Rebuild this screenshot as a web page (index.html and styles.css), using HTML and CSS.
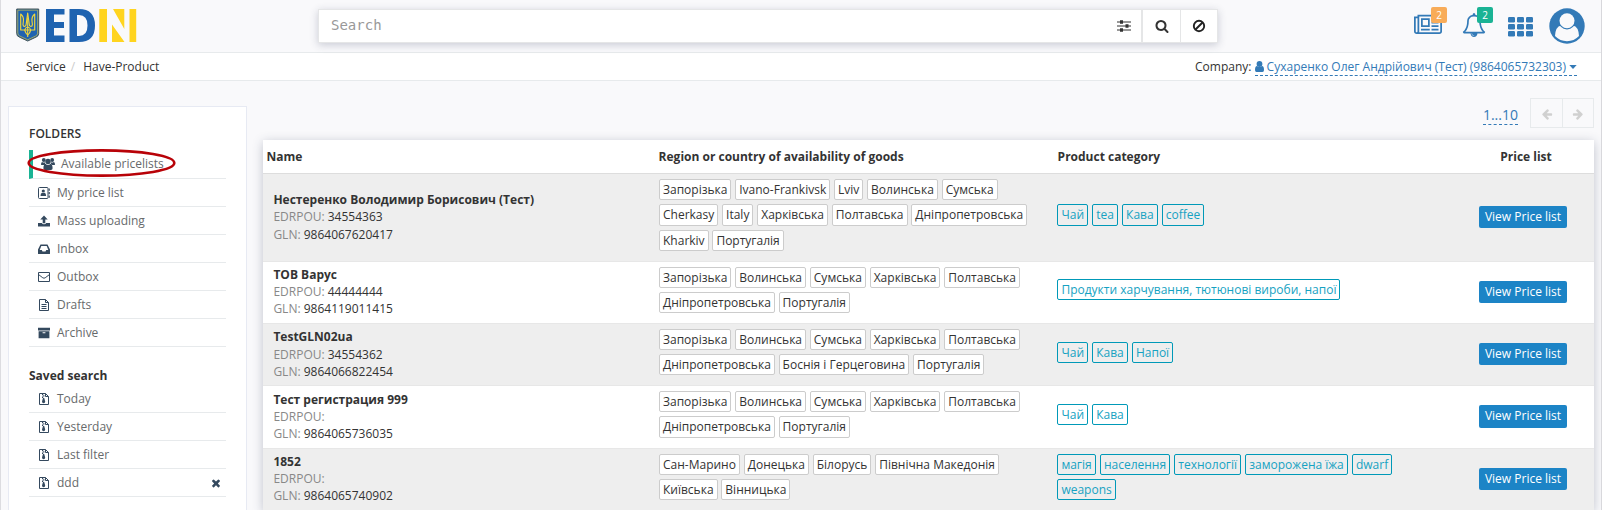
FILE: index.html
```html
<!DOCTYPE html>
<html lang="en">
<head>
<meta charset="utf-8">
<title>EDIN – Have-Product</title>
<link rel="stylesheet" href="styles.css">
</head>
<body>
<svg class="defs" aria-hidden="true">
  <symbol id="file" viewBox="0 0 12 12"><path d="M1.5.5h6l3 3v8h-9z M7.5.5v3h3" fill="none" stroke="currentColor"/><path d="M3.5 5.5h5M3.5 7.5h5M3.5 9.5h5" stroke="currentColor" fill="none"/></symbol>
  <symbol id="zip" viewBox="0 0 12 12"><path d="M1.5.5h6l3 3v8h-9z M7.5.5v3h3" fill="none" stroke="currentColor"/><path d="M4 1h1.2v1.3H4zM5.2 2.3h1.2v1.3H5.2zM4 3.6h1.2v1.3H4zM5 4.9h1.2L7.2 8.6Q7.2 10.2 5.6 10.2T4 8.6z" fill="currentColor"/></symbol>
  <symbol id="arrow" viewBox="0 0 1792 1792"><path fill="currentColor" d="M1600 960q0 54-37 91l-651 651q-39 37-91 37-51 0-90-37l-75-75q-38-38-38-91t38-91l293-293h-704q-52 0-84.5-37.5t-32.5-90.5v-128q0-53 32.5-90.5t84.5-37.5h704l-293-294q-38-36-38-90t38-90l75-75q38-38 90-38 53 0 91 38l651 651q37 35 37 90z"/></symbol>
</svg>
<div class="page">
  <header class="topbar">
    <svg class="logo" width="121" height="34" viewBox="0 0 121 34">
      <path d="M.7 1h22v24.500q0 2.500-2.500 3.500l-8.500 4-8.500-4q-2.500-1-2.500-3.500z" fill="#1f63b0" stroke="#46565c" stroke-width="1"/>
      <g fill="none" stroke="#f0d53c" stroke-linejoin="round">
        <path d="M1.800 2.200h19.800v23q0 2-2 2.800l-7.900 3.800-7.900-3.800q-2-.8-2-2.800z" stroke-width=".6"/>
        <path d="M4.700 6v16h4q.8 3.500 3 5 2.200-1.500 3-5h4V6q-3.200 2.500-2.700 7l.4 3.500q0 2-1.700 2-1.500-.3-1.500-2.500L11.700 5l-1.500 11q0 2.200-1.500 2.500-1.700 0-1.700-2L7.400 13Q7.900 8.500 4.700 6z" stroke-width="1.150"/>
        <path d="M11.700 10v19M8.700 22q.5-2.500 3-3 2.500.5 3 3z" stroke-width="1.100"/>
      </g>
      <path d="M30 1h18.500v5.500H38v7.500h10v6H38v7.500h10.500V34H30z" fill="#1f63b0"/>
      <path fill-rule="evenodd" d="M53.500 1H63q16 0 16 16.500T63 34h-9.500zM61 7v21h2q8.500 0 8.500-10.500T63 7z" fill="#1f63b0"/>
      <path d="M83.300 1h7.700v33h-7.700zM96 16.500l12.500 17.500H96zM97 1h11.300v20zM113.500 1h6.700v33h-6.700z" fill="#ffd41f"/>
    </svg>
    <div class="search">
      <div class="search-field"><span>Search</span>
        <svg width="14" height="12" viewBox="0 0 14 12"><path d="M0 2h14M0 6h14M0 10h14" stroke="#333" stroke-width="1.200"/><path d="M3 .3h3v3.400H3zM8.500 4.300h3v3.400h-3zM3 8.300h3v3.400H3z" fill="#333"/></svg>
      </div>
      <div class="search-btn"><svg width="14" height="14" viewBox="0 0 1792 1792"><path fill="#333" d="M1216 832q0-185-131.500-316.500t-316.500-131.500-316.500 131.500-131.500 316.500 131.500 316.500 316.500 131.500 316.500-131.500 131.500-316.500zm512 832q0 52-38 90t-90 38q-54 0-90-38l-343-342q-179 124-399 124-143 0-273.500-55.500t-225-150-150-225-55.500-273.500 55.500-273.500 150-225 225-150 273.500-55.500 273.500 55.500 225 150 150 225 55.500 273.500q0 220-124 399l343 343q37 37 37 90z"/></svg></div>
      <div class="search-btn"><svg width="14" height="14" viewBox="0 0 14 14"><g fill="none" stroke="#222" stroke-width="1.900"><circle cx="7" cy="7" r="5.200"/><path d="M3.500 10.500l7-7"/></g></svg></div>
    </div>
    <nav class="actions">
      <span class="action news"><svg width="28" height="24.500" viewBox="0 0 2048 1792"><path fill="currentColor" d="M1024 512h-384v384h384v-384zm128 640v128h-640v-128h640zm0-768v640h-640v-640h640zm640 768v128h-512v-128h512zm0-256v128h-512v-128h512zm0-256v128h-512v-128h512zm0-256v128h-512v-128h512zm-1536 960v-960h-128v960q0 26 19 45t45 19 45-19 19-45zm1664 0v-1088h-1536v1088q0 33-11 64h1483q26 0 45-19t19-45zm128-1216v1216q0 80-56 136t-136 56h-1664q-80 0-136-56t-56-136v-1088h256v-128h1792z"/></svg><b class="badge orange">2</b></span>
      <span class="action bell"><svg width="24" height="24" viewBox="0 0 1792 1792"><path fill="currentColor" d="M912 1696q0-16-16-16-59 0-101.500-42.500t-42.500-101.500q0-16-16-16t-16 16q0 73 51.500 124.500t124.500 51.500q16 0 16-16zm-666-288h1300q-266-300-266-832 0-51-24-105t-69-103-121.500-80.500-169.500-31.500-169.500 31.500-121.500 80.500-69 103-24 105q0 532-266 832zm1482 0q0 52-38 90t-90 38h-448q0 106-75 181t-181 75-181-75-75-181h-448q-52 0-90-38t-38-90q50-42 91-88t85-119.500 74.500-158.500 50-206 19.500-260q0-152 117-282.500t307-158.500q-8-19-8-39 0-40 28-68t68-28 68 28 28 68q0 20-8 39 190 28 307 158.500t117 282.500q0 139 19.500 260t50 206 74.500 158.500 85 119.500 91 88z"/></svg><b class="badge green">2</b></span>
      <svg class="grid-icon" width="25" height="20" viewBox="0 0 25 20"><g fill="currentColor"><rect width="7" height="5.500" rx="1.200"/><rect x="9" width="7" height="5.500" rx="1.200"/><rect x="18" width="7" height="5.500" rx="1.200"/><rect y="7" width="7" height="5.500" rx="1.200"/><rect x="9" y="7" width="7" height="5.500" rx="1.200"/><rect x="18" y="7" width="7" height="5.500" rx="1.200"/><rect y="14" width="7" height="5.500" rx="1.200"/><rect x="9" y="14" width="7" height="5.500" rx="1.200"/><rect x="18" y="14" width="7" height="5.500" rx="1.200"/></g></svg>
      <svg width="36" height="36" viewBox="0 0 36 36"><circle cx="18" cy="18" r="17.700" fill="currentColor"/><path d="M6 28q.5-9.500 6-10.500 6 4.500 12 0 5.500 1 6 10.500Q25 33.200 18 33.200T6 28z" fill="#f9f9fb"/><circle cx="18" cy="12.700" r="8.700" fill="currentColor"/><circle cx="18" cy="12.700" r="7.500" fill="#f9f9fb"/></svg>
    </nav>
  </header>

  <div class="crumbs">
    <div class="trail"><span>Service</span><i>/</i><span>Have-Product</span></div>
    <div class="company">Company:&nbsp;<a class="company-link"><svg width="9" height="11" viewBox="0 0 9 11"><circle cx="4.500" cy="3" r="2.900" fill="currentColor"/><path d="M0 9q0-3.800 2-4 2.500 1.800 5 0 2 .2 2 4 0 2-1.500 2h-6Q0 11 0 9z" fill="currentColor"/></svg><span>Сухаренко Олег Андрійович (Тест) (9864065732303)</span><svg width="8" height="4" viewBox="0 0 8 4"><path d="M.3 0h7.400L4 4z" fill="currentColor"/></svg></a></div>
  </div>

  <div class="body">
    <aside class="sidebar">
      <h4 class="folders">FOLDERS</h4>
      <ul class="menu">
        <li class="active"><svg width="14" height="12" viewBox="0 0 14 12"><g fill="currentColor"><circle cx="2.800" cy="2" r="1.900"/><circle cx="11.200" cy="2" r="1.900"/><circle cx="7" cy="3.500" r="2.700"/><path d="M0 6.500Q0 4 1.200 4q1.500 1 2.700.2 0 1.300.8 2L3 7H1Q0 7 0 6.500zM14 6.500Q14 4 12.800 4q-1.500 1-2.700.2 0 1.300-.8 2L11 7h2q1 0 1-.5zM2.400 10.200q0-4 2.200-4.200 2.400 1.800 4.800 0 2.200.2 2.200 4.200 0 1.800-1.600 1.800H4q-1.600 0-1.600-1.800z"/></g></svg>Available pricelists<svg class="mark" width="149" height="30" viewBox="0 0 149 30"><ellipse cx="74.500" cy="15" rx="72.800" ry="12.600" fill="none" stroke="#b80208" stroke-width="2.600"/></svg></li>
        <li><svg width="12" height="12" viewBox="0 0 12 12"><rect x=".5" y=".5" width="9.500" height="11" rx="1" fill="none" stroke="currentColor"/><circle cx="5.300" cy="4" r="1.600" fill="currentColor"/><path d="M2.500 9q0-3 1.500-3.300 1.300.8 2.600 0Q8.100 6 8.100 9z" fill="currentColor"/><path d="M11.200 1.500v2.300M11.200 5v2.300M11.200 8.500v2.300" stroke="currentColor" stroke-width="1.200"/></svg>My price list</li>
        <li><svg width="12" height="12" viewBox="0 0 12 12"><path d="M6 .5l3.700 4H7.300v3.700H4.700V4.500H2.300zM0 8h3.800q.5 1.300 2.200 1.300T8.200 8H12v3.500H0z" fill="currentColor"/></svg>Mass uploading</li>
        <li><svg width="12" height="12" viewBox="0 0 12 12"><path fill-rule="evenodd" d="M2.500 1.500h7L12 6.500v4q0 .5-.5.500H.5q-.5 0-.5-.5v-4zM3.300 3L1.700 7h2.100l.7 1.400h3L8.200 7h2.100L8.700 3z" fill="currentColor"/></svg>Inbox</li>
        <li><svg width="12" height="12" viewBox="0 0 12 12"><path d="M.5 1.500h11v9H.5zM.5 3.500l4.300 3.300q1.200.8 2.400 0l4.300-3.300" fill="none" stroke="currentColor"/></svg>Outbox</li>
        <li><svg width="12" height="12"><use href="#file"/></svg>Drafts</li>
        <li><svg width="12" height="12" viewBox="0 0 12 12"><path fill-rule="evenodd" d="M0 .7h12v2.800H0zM.6 4.200h10.800v7H.6zM4.600 5.200v1h2.800v-1z" fill="currentColor"/></svg>Archive</li>
      </ul>
      <h4 class="saved">Saved search</h4>
      <ul class="menu">
        <li><svg width="12" height="12"><use href="#zip"/></svg>Today</li>
        <li><svg width="12" height="12"><use href="#zip"/></svg>Yesterday</li>
        <li><svg width="12" height="12"><use href="#zip"/></svg>Last filter</li>
        <li><svg width="12" height="12"><use href="#zip"/></svg>ddd<svg class="remove" width="12" height="12" viewBox="0 0 1792 1792"><path fill="currentColor" d="M1490 1322q0 40-28 68l-136 136q-28 28-68 28t-68-28l-294-294-294 294q-28 28-68 28t-68-28l-136-136q-28-28-28-68t28-68l294-294-294-294q-28-28-28-68t28-68l136-136q28-28 68-28t68 28l294 294 294-294q28-28 68-28t68 28l136 136q28 28 28 68t-28 68l-294 294 294 294q28 28 28 68z"/></svg></li>
      </ul>
    </aside>

    <main class="content">
      <div class="pager"><a class="range">1...10</a><div class="pager-btns"><span><svg class="flip" width="12" height="12"><use href="#arrow"/></svg></span><span><svg width="12" height="12"><use href="#arrow"/></svg></span></div></div>
      <section class="table">
        <div class="row head"><div>Name</div><div>Region or country of availability of goods</div><div>Product category</div><div class="center">Price list</div></div>

        <div class="row odd">
          <div class="name"><b>Нестеренко Володимир Борисович (Тест)</b><p><i>EDRPOU:</i> 34554363</p><p><i>GLN:</i> 9864067620417</p></div>
          <div class="tags"><span>Запорізька</span><span>Ivano-Frankivsk</span><span>Lviv</span><span>Волинська</span><span>Сумська</span><span>Cherkasy</span><span>Italy</span><span>Харківська</span><span>Полтавська</span><span>Дніпропетровська</span><span>Kharkiv</span><span>Португалія</span></div>
          <div class="tags cat"><span>Чай</span><span>tea</span><span>Кава</span><span>coffee</span></div>
          <div class="center"><a class="view">View Price list</a></div>
        </div>
        <div class="row">
          <div class="name"><b>ТОВ Варус</b><p><i>EDRPOU:</i> 44444444</p><p><i>GLN:</i> 9864119011415</p></div>
          <div class="tags"><span>Запорізька</span><span>Волинська</span><span>Сумська</span><span>Харківська</span><span>Полтавська</span><span>Дніпропетровська</span><span>Португалія</span></div>
          <div class="tags cat"><span>Продукти харчування, тютюнові вироби, напої</span></div>
          <div class="center"><a class="view">View Price list</a></div>
        </div>
        <div class="row odd">
          <div class="name"><b>TestGLN02ua</b><p><i>EDRPOU:</i> 34554362</p><p><i>GLN:</i> 9864066822454</p></div>
          <div class="tags"><span>Запорізька</span><span>Волинська</span><span>Сумська</span><span>Харківська</span><span>Полтавська</span><span>Дніпропетровська</span><span>Боснія і Герцеговина</span><span>Португалія</span></div>
          <div class="tags cat"><span>Чай</span><span>Кава</span><span>Напої</span></div>
          <div class="center"><a class="view">View Price list</a></div>
        </div>
        <div class="row">
          <div class="name"><b>Тест регистрация 999</b><p><i>EDRPOU:</i></p><p><i>GLN:</i> 9864065736035</p></div>
          <div class="tags"><span>Запорізька</span><span>Волинська</span><span>Сумська</span><span>Харківська</span><span>Полтавська</span><span>Дніпропетровська</span><span>Португалія</span></div>
          <div class="tags cat"><span>Чай</span><span>Кава</span></div>
          <div class="center"><a class="view">View Price list</a></div>
        </div>
        <div class="row odd">
          <div class="name"><b>1852</b><p><i>EDRPOU:</i></p><p><i>GLN:</i> 9864065740902</p></div>
          <div class="tags"><span>Сан-Марино</span><span>Донецька</span><span>Білорусь</span><span>Північна Македонія</span><span>Київська</span><span>Вінницька</span></div>
          <div class="tags cat"><span>магія</span><span>населення</span><span>технології</span><span>заморожена їжа</span><span>dwarf</span><span>weapons</span></div>
          <div class="center"><a class="view">View Price list</a></div>
        </div>
      </section>
    </main>
  </div>
</div>
</body>
</html>
```
FILE: styles.css
```css
* { box-sizing: border-box; }
html, body { height: 100%; }
body {
  margin: 0;
  overflow: hidden;
  background: #f9f9fb;
  color: #333;
  font: 12px/17.14px "Open Sans", "Noto Sans", sans-serif;
}
svg { display: block; flex: none; }
i { font-style: normal; }
p, h4, ul { margin: 0; padding: 0; }
.defs { display: none; }

.page {
  height: 510px;
  overflow: hidden;
  border-left: 1px solid #dcdce0;
  border-right: 1px solid #d8d8dc;
}

/* Top bar */
.topbar {
  display: grid;
  grid-template-columns: 317px 900px 1fr;
  height: 53px;
  border-bottom: 1px solid #e7eaec;
}
.logo { margin: 8px 0 0 15px; }
.search {
  display: flex;
  height: 34px;
  margin-top: 9px;
  background: #fff;
  border: 1px solid #e5e6e7;
  box-shadow: 0 2px 8px rgba(50, 60, 90, .24);
}
.search-field {
  display: flex;
  flex: 1;
  align-items: center;
  justify-content: space-between;
  padding: 0 10px 0 12px;
  color: #999;
  font: 14px/20px "DejaVu Sans Mono", monospace;
}
.search-field span { margin-top: -2px; }
.search-btn {
  display: flex;
  width: 37px;
  align-items: center;
  justify-content: center;
  border-left: 1px solid #e5e6e7;
}
.search-field + .search-btn { width: 39px; border-left-width: 2px; }
.actions {
  display: flex;
  justify-content: flex-end;
  align-items: flex-start;
  padding: 8px 16px 0 0;
  color: #337ab7;
}
.action { position: relative; }
.news { margin: 5px 20px 0 0; }
.bell { margin: 5px 22px 0 0; }
.badge {
  position: absolute;
  top: -6px;
  width: 16px;
  height: 16px;
  border-radius: 2px;
  color: #fff;
  font-size: 10px;
  font-weight: 400;
  line-height: 16px;
  text-align: center;
}
.news .badge { left: 17px; }
.bell .badge { left: 15px; }
.orange { background: #f8ac59; }
.green { background: #1ab394; }
.grid-icon { margin: 9px 16px 0 0; }

/* Breadcrumbs */
.crumbs {
  display: flex;
  justify-content: space-between;
  height: 28px;
  padding: 5px 24px 0 25px;
  background: #fff;
  border-bottom: 1px solid #e7eaec;
}
.trail i { padding: 0 8px 0 5px; color: #ccc; }
.company { display: flex; }
.company-link {
  display: flex;
  align-items: center;
  gap: 3px;
  height: 18px;
  border-bottom: 1px dashed #337ab7;
  color: #337ab7;
}

.body { display: flex; align-items: flex-start; }

/* Sidebar */
.sidebar {
  flex: none;
  width: 239px;
  height: 440px;
  margin: 25px 16px 0 7px;
  padding: 18px 20px 0;
  background: #fff;
  border: 1px solid #e7eaf3;
}
h4 { font-size: 12px; line-height: 17px; }
.folders { font-weight: 600; margin-bottom: 8px; }
.saved { margin: 20px 0 0; line-height: 18px; }
.menu { list-style: none; }
.menu li {
  display: flex;
  align-items: center;
  gap: 7px;
  height: 28px;
  padding-left: 9px;
  border-bottom: 1px solid #e7eaec;
  color: #676a6c;
}
.menu svg { color: #34495e; }
.menu .active {
  position: relative;
  height: 29px;
  padding-left: 8px;
  gap: 6px;
  border-left: 4px solid #1ab394;
}
.menu .mark { position: absolute; left: -6px; top: -2px; }
.menu .remove { margin: 0 4px 0 auto; }

/* Pager */
.content { flex: none; width: 1331px; }
.pager {
  display: flex;
  align-items: center;
  justify-content: flex-end;
  gap: 12px;
  height: 30px;
  margin-top: 17px;
}
.range {
  height: 19px;
  margin-top: 4px;
  border-bottom: 1px dashed #337ab7;
  color: #337ab7;
  font-size: 14px;
  line-height: 18px;
}
.pager-btns { display: flex; height: 30px; border: 1px solid #e7eaec; color: #d0d0d0; }
.pager-btns span { display: flex; width: 31px; padding-top: 2px; align-items: center; justify-content: center; }
.pager-btns span + span { border-left: 1px solid #e7eaec; }
.flip { transform: scaleX(-1); }

/* Table */
.table { margin-top: 12px; background: #fff; box-shadow: 0 2px 10px rgba(50, 60, 90, .28); }
.row {
  display: grid;
  grid-template-columns: 392px 399px 391px 149px;
  align-items: center;
  padding: 5px 0 6px;
  border-bottom: 1px solid #e7e7e7;
}
.head { height: 34.350px; padding: 0; border-bottom-color: #ddd; font-weight: 700; }
.head div:first-child { padding-left: 3.500px; }
.head div:nth-child(2), .head div:nth-child(3) { padding-left: 3.600px; }
.odd { background: #eee; }
.center { padding-left: 7px; text-align: center; }
.head .center { padding-left: 13px; }
.name { margin: -1px 0; padding-left: 10.400px; }
.name b { display: block; }
.name i { color: #888; }
.tags { display: flex; flex-wrap: wrap; gap: 0 3.800px; padding: 0 20px 0 4px; }
.tags span {
  margin-bottom: 4px;
  padding: 1px 3px;
  background: #fff;
  border: 1px solid #ccc;
  border-radius: 2px;
}
.cat { gap: 0 4.200px; padding: 0 40px 0 3.400px; }
.cat span { background: none; border-color: #0099b8; color: #16a2c2; }
.view {
  display: inline-block;
  padding: 2px 6px 3px;
  border-radius: 2px;
  background: #1c84c6;
  color: #fff;
}
```
